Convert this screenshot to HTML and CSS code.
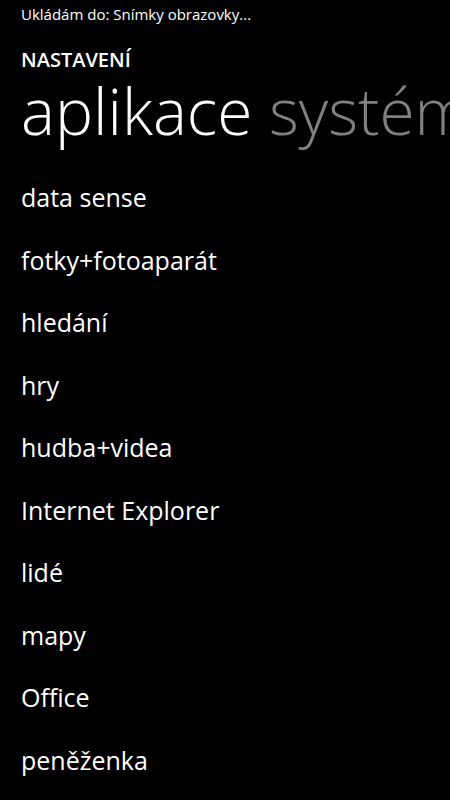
FILE: index.html
```html
<!DOCTYPE html>
<html lang="cs">
<head>
<meta charset="utf-8">
<link rel="stylesheet" href="styles.css">
</head>
<body>
<div class="screen">
  <div class="status">Ukládám do: Snímky obrazovky...</div>
  <div class="title">NASTAVENÍ</div>
  <div class="pivot">
    <span class="pivot-item active">aplikace</span>
    <span class="pivot-item">systém</span>
  </div>
  <ul class="list">
    <li>data sense</li>
    <li>fotky+fotoaparát</li>
    <li>hledání</li>
    <li>hry</li>
    <li>hudba+videa</li>
    <li>Internet Explorer</li>
    <li>lidé</li>
    <li>mapy</li>
    <li>Office</li>
    <li>peněženka</li>
  </ul>
</div>
</body>
</html>
```
FILE: styles.css
```css
html, body {
  margin: 0;
  padding: 0;
  background: #000;
}
body {
  width: 450px;
  height: 800px;
  overflow: hidden;
  color: #fff;
  font-family: "Open Sans", "Noto Sans", sans-serif;
}
.screen {
  padding-left: 21px;
}
.status {
  font-size: 15px;
  line-height: 16px;
  padding-top: 6px;
  height: 24px;
}
.title {
  font-size: 20px;
  font-weight: 600;
  line-height: 24px;
  margin-top: 18px;
}
.pivot {
  font-size: 64px;
  font-weight: 300;
  line-height: 70px;
  margin-top: 4px;
  white-space: nowrap;
}
.pivot-item.active {
  color: #fff;
}
.pivot-item {
  color: #808080;
}
.list {
  list-style: none;
  margin: 0;
  padding: 0;
  margin-top: 20px;
}
.list li {
  font-size: 25px;
  font-weight: 400;
  line-height: 62.5px;
  height: 62.5px;
}
```
